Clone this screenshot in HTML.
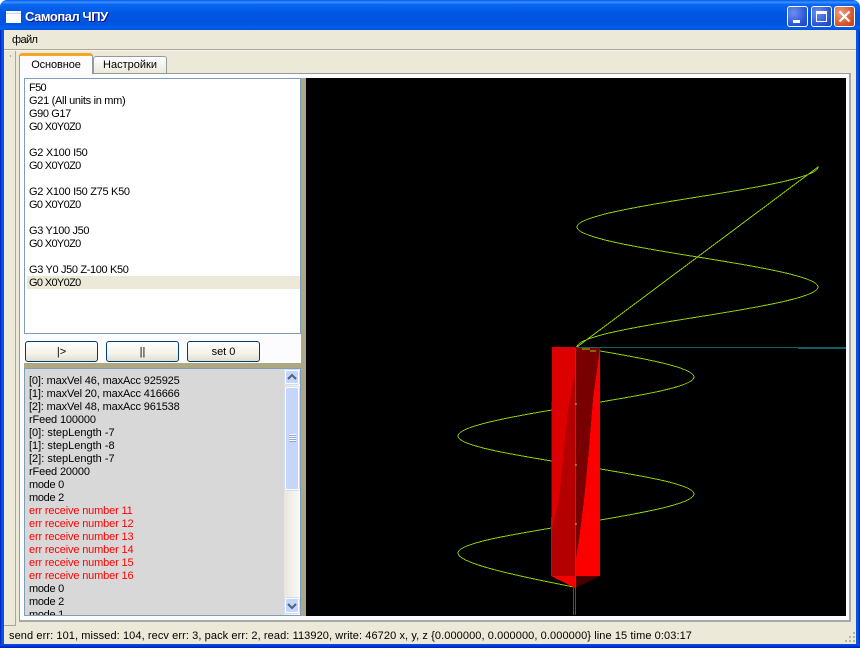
<!DOCTYPE html>
<html><head><meta charset="utf-8"><title>Самопал ЧПУ</title>
<style>
html,body{margin:0;padding:0;background:#fff}
#w{position:relative;width:860px;height:648px;overflow:hidden;background:#ece9d8;font:11px/13px "Liberation Sans","Noto Sans CJK SC",sans-serif;color:#000;border-radius:7px 7px 0 0}
#w div{position:absolute;box-sizing:border-box}
.fl{left:0;top:30px;width:4px;height:618px;background:linear-gradient(90deg,#0019cf,#0855dd 50%,#0855dd)}
.fr{right:0;top:30px;width:4px;height:618px;background:linear-gradient(90deg,#0855dd,#0855dd 50%,#0019cf)}
.fb{left:0;top:644px;width:860px;height:4px;background:linear-gradient(#0855dd,#0019cf)}
.tb{left:0;top:0;width:860px;height:30px;background:linear-gradient(#0058ee 0,#3c93ff 8%,#0a68f0 14%,#0056e4 45%,#0053dc 80%,#0060f0 92%,#0050d8 100%)}
.tt{left:25px;top:8px;font:bold 13px/17px "Liberation Sans","Noto Sans CJK SC",sans-serif;letter-spacing:-.45px;color:#fff;text-shadow:1px 1px 0 #0f1089;white-space:nowrap}
.ic{left:6px;top:11px;width:15px;height:12px;background:#fff;border-top:2px solid #fff;box-shadow:inset 0 1px 0 #c8d8f8}
.bt{top:6px;width:21px;height:21px;border:1px solid #fff;border-radius:3px;background:radial-gradient(circle at 30% 30%,#6f90f0,#2a55d8 65%,#1c3fc0)}
.c{background:radial-gradient(circle at 30% 30%,#f0a080,#d85a30 60%,#c03818)}
.mn{left:12px;top:34px;white-space:nowrap;letter-spacing:-.6px}
.tabp{left:19px;top:73px;width:832px;height:549px;background:#fcfcfe;border:1px solid #919b9c;border-right:2px solid #a5a9a8;border-bottom:2px solid #a5a9a8}
.t1{left:19px;top:53px;width:74px;height:21px;background:#fcfcfe;border:1px solid #919b9c;border-bottom:0;border-top:3px solid #f5a623;border-radius:3px 3px 0 0;text-align:center;line-height:19px;letter-spacing:-.1px}
.t2{left:93px;top:56px;width:74px;height:17px;background:linear-gradient(#fff,#ece9d8);border:1px solid #919b9c;border-bottom:0;border-radius:3px 3px 0 0;text-align:center;line-height:16px}
.box{border:1px solid #7f9db9;overflow:hidden}
.l{left:4px;white-space:nowrap;height:13px}
.a{letter-spacing:-.65px}.b{letter-spacing:-.3px}.d{letter-spacing:-.14px}.e{letter-spacing:-.3px}
.r{color:#f00;letter-spacing:-.15px}
.pb{top:341px;width:73px;height:21px;border:1px solid #003c74;border-radius:3px;background:linear-gradient(#fff,#f4f2ea 60%,#e2dfd0);text-align:center;line-height:20px}
.sb{background:#c6d6fb;border:1px solid #fff;outline:1px solid #d0dcf4;border-radius:2px}
</style></head><body>
<div id="w">
<div class="tb"></div>
<div class="ic"></div>
<div class="tt">Самопал ЧПУ</div>
<div class="bt" style="left:787px"><div style="left:5px;top:13px;width:7px;height:3px;background:#fff"></div></div>
<div class="bt" style="left:811px"><div style="left:4px;top:4px;width:11px;height:11px;border:1px solid #fff;border-top:3px solid #fff"></div></div>
<div class="bt c" style="left:834px"><svg width="19" height="19" style="position:absolute;left:0;top:0"><path d="M4.5 4.5L14.5 14.5M14.5 4.5L4.5 14.5" stroke="#fff" stroke-width="2.2" fill="none"/></svg></div>
<div class="fl"></div><div class="fr"></div><div class="fb"></div>

<div class="mn">файл</div>
<div style="left:4px;top:49px;width:852px;height:1px;background:#aca899"></div>
<div style="left:4px;top:50px;width:852px;height:1px;background:#f6f5ee"></div>
<div style="left:4px;top:51px;width:12px;height:575px;border-right:1px solid #aca899;border-bottom:1px solid #aca899"></div>
<div style="left:10px;top:55px;width:1px;height:2px;background:#aca899"></div>

<div class="tabp"></div>
<div class="t2">Настройки</div>
<div class="t1">Основное</div>

<div style="left:301px;top:78px;width:5px;height:538px;background:#aba883"></div>
<div style="left:24px;top:363px;width:282px;height:5px;background:#aba883"></div>
<div style="left:306px;top:78px;width:540px;height:538px;background:#000"></div>

<div class="box" style="left:24px;top:78px;width:277px;height:256px;background:#fff">
<div style="left:2px;top:197px;width:273px;height:13px;background:#ece9d8"></div>
<div class="l a" style="top:3px">F50</div>
<div class="l b" style="top:16px">G21 (All units in mm)</div>
<div class="l b" style="top:29px;letter-spacing:-.4px">G90 G17</div>
<div class="l a" style="top:42px">G0 X0Y0Z0</div>
<div class="l b" style="top:68px">G2 X100 I50</div>
<div class="l a" style="top:81px">G0 X0Y0Z0</div>
<div class="l b" style="top:107px">G2 X100 I50 Z75 K50</div>
<div class="l a" style="top:120px">G0 X0Y0Z0</div>
<div class="l b" style="top:146px;letter-spacing:-.35px">G3 Y100 J50</div>
<div class="l a" style="top:159px">G0 X0Y0Z0</div>
<div class="l b" style="top:185px;letter-spacing:-.35px">G3 Y0 J50 Z-100 K50</div>
<div class="l a" style="top:198px">G0 X0Y0Z0</div>
</div>

<div class="pb" style="left:25px">|&gt;</div>
<div class="pb" style="left:106px">||</div>
<div class="pb" style="left:187px">set 0</div>

<div class="box" style="left:24px;top:368px;width:277px;height:248px;background:#d8d8d8">
<div class="l d" style="top:6px">[0]: maxVel 46, maxAcc 925925</div>
<div class="l d" style="top:19px">[1]: maxVel 20, maxAcc 416666</div>
<div class="l d" style="top:32px">[2]: maxVel 48, maxAcc 961538</div>
<div class="l d" style="top:45px">rFeed 100000</div>
<div class="l" style="top:58px">[0]: stepLength -7</div>
<div class="l" style="top:71px">[1]: stepLength -8</div>
<div class="l" style="top:84px">[2]: stepLength -7</div>
<div class="l d" style="top:97px">rFeed 20000</div>
<div class="l e" style="top:110px">mode 0</div>
<div class="l e" style="top:123px">mode 2</div>
<div class="l r" style="top:136px">err receive number 11</div>
<div class="l r" style="top:149px">err receive number 12</div>
<div class="l r" style="top:162px">err receive number 13</div>
<div class="l r" style="top:175px">err receive number 14</div>
<div class="l r" style="top:188px">err receive number 15</div>
<div class="l r" style="top:201px">err receive number 16</div>
<div class="l e" style="top:214px">mode 0</div>
<div class="l e" style="top:227px">mode 2</div>
<div class="l e" style="top:240px">mode 1</div>
<div style="left:259px;top:0;width:17px;height:246px;background:linear-gradient(90deg,#e8e6de,#fbfbf8)"></div>
<div class="sb" style="left:260px;top:1px;width:14px;height:14px"><svg width="12" height="12" style="position:absolute;left:0;top:0"><path d="M2 8L6 4L10 8" stroke="#4d6185" stroke-width="2" fill="none"/></svg></div>
<div class="sb" style="left:260px;top:18px;width:14px;height:103px"><div style="left:3px;top:46px;width:7px;height:8px;background:repeating-linear-gradient(#fff 0 1px,#8ea6dc 1px 2px)"></div></div>
<div class="sb" style="left:260px;top:229px;width:14px;height:15px"><svg width="12" height="13" style="position:absolute;left:0;top:0"><path d="M2 5L6 9L10 5" stroke="#4d6185" stroke-width="2" fill="none"/></svg></div>
</div>

<svg width="860" height="648" viewBox="0 0 860 648" style="position:absolute;left:0;top:0">
<g fill="none" stroke="#8fd000" stroke-width="1" shape-rendering="crispEdges">
<path d="M577 347C577 337 634.4 327 697.5 317C760.6 307 818 297 818 287C818 277 760.6 267 697.5 257C634.4 247 577 237 577 227C577 217 634.4 207 697.5 197C760.6 187 818 177 818 167L577 347"/>
<path d="M576 347C637.8 357 694 367 694 377C694 387 637.8 396 576 406C514.2 416 458 426 458 436C458 446 514.2 455 576 465C637.8 475 694 484 694 494C694 504 637.8 514 576 524C514.2 534 458 543 458 553C458 563 512 575 574 587"/>
</g>
<g shape-rendering="crispEdges">
<path d="M552 347H576V576H551Z" fill="#dc0000"/>
<path d="M575 373L568 410L563 460L559 500L554 520L552 530V576H575Z" fill="#b40000"/>
<path d="M551 576H575V588Z" fill="#f40000"/>
<path d="M575 347H600V576H575Z" fill="#fc0000"/>
<path d="M575 347H600L593 400L588 460L584 500L579 540L575 564Z" fill="#780000"/>
<path d="M575 576H600L575 588Z" fill="#4a0000"/>
<path d="M577 347.5H846M798 348.5H846" stroke="#0f6060" fill="none"/>
<path d="M575.5 348V615M573.5 588V615" stroke="#0f6a6a" fill="none"/>
<path d="M582 349H590M590 351H596" stroke="#8fd000" fill="none"/>
<path d="M575 404h2M575 465h2M575 524h2" stroke="#c8c800" fill="none"/>
</g>
</svg>

<div style="left:9px;top:630px;white-space:nowrap;letter-spacing:.09px">send err: 101, missed: 104, recv err: 3, pack err: 2, read: 113920, write: 46720 x, y, z {0.000000, 0.000000, 0.000000} line 15 time 0:03:17</div>
<svg width="14" height="14" style="position:absolute;left:842px;top:630px"><path d="M11 2h2v2h-2zM7 6h2v2H7zM11 6h2v2h-2zM3 10h2v2H3zM7 10h2v2H7zM11 10h2v2h-2z" fill="#b5b29e"/></svg>
</div>
</body></html>
